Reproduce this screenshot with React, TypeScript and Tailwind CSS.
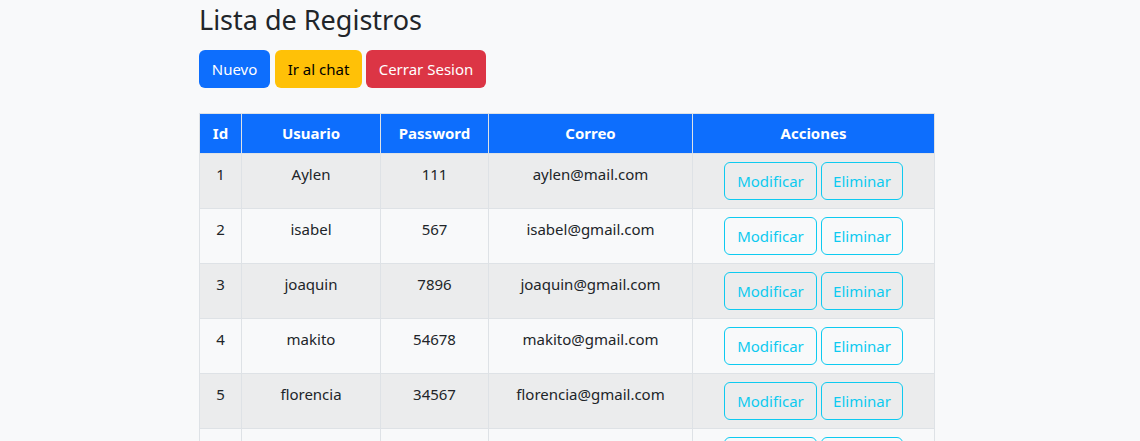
import React from "react";

const rows = [
  { id: 1, u: "Aylen", p: "111", c: "aylen@mail.com" },
  { id: 2, u: "isabel", p: "567", c: "isabel@gmail.com" },
  { id: 3, u: "joaquin", p: "7896", c: "joaquin@gmail.com" },
  { id: 4, u: "makito", p: "54678", c: "makito@gmail.com" },
  { id: 5, u: "florencia", p: "34567", c: "florencia@gmail.com" },
  { id: 6, u: "", p: "", c: "" },
];

export default function App() {
  return (
    <div
      className="w-[1140px] h-[441px] overflow-hidden bg-[#f8f9fa] text-[#212529] text-[16px] leading-[24px]"
      style={{ fontFamily: '"Noto Sans", "Open Sans", sans-serif' }}
    >
      <div className="ml-[199px] w-[735px]">
        <h2 className="text-[27px] leading-[38px] font-normal mb-[12px] pt-[1px] h-[38px]">Lista de Registros</h2>
        <div className="flex gap-[4px] mb-[25px]">
          <button className="w-[71px] h-[38px] rounded-[6px] bg-[#0d6efd] text-white text-[15px]">Nuevo</button>
          <button className="w-[87px] h-[38px] rounded-[6px] bg-[#ffc107] text-black text-[15px] ml-[1px]">Ir al chat</button>
          <button className="w-[120px] h-[38px] rounded-[6px] bg-[#dc3545] text-white text-[15px]">Cerrar Sesion</button>
        </div>
        <table className="w-[735px] table-fixed border-collapse border border-[#dee2e6]">
          <colgroup>
            <col className="w-[42px]" />
            <col className="w-[139px]" />
            <col className="w-[108px]" />
            <col className="w-[204px]" />
            <col className="w-[242px]" />
          </colgroup>
          <thead>
            <tr className="bg-[#0d6efd] text-white h-[40px]">
              {["Id", "Usuario", "Password", "Correo", "Acciones"].map((h) => (
                <th key={h} className="border border-[#dee2e6] font-bold text-[15px] text-center px-[8px] pt-[6px] pb-[8px]">
                  {h}
                </th>
              ))}
            </tr>
          </thead>
          <tbody>
            {rows.map((r, i) => (
              <tr key={r.id} className={i % 2 === 0 ? "bg-[#ebeced]" : "bg-[#f8f9fa]"}>
                <td className="border border-[#dee2e6] text-center align-top p-[8px] h-[55px] text-[15px]">{r.u ? r.id : ""}</td>
                <td className="border border-[#dee2e6] text-center align-top p-[8px] text-[15px]">{r.u}</td>
                <td className="border border-[#dee2e6] text-center align-top p-[8px] text-[15px]">{r.p}</td>
                <td className="border border-[#dee2e6] text-center align-top p-[8px] text-[15px]">{r.c}</td>
                <td className="border border-[#dee2e6] align-top p-[8px]">
                  <div className="flex justify-center gap-[4px]">
                    <button className="w-[93px] h-[38px] rounded-[6px] border border-[#0dcaf0] text-[#0dcaf0] text-[15px]">Modificar</button>
                    <button className="w-[82px] h-[38px] rounded-[6px] border border-[#0dcaf0] text-[#0dcaf0] text-[15px]">Eliminar</button>
                  </div>
                </td>
              </tr>
            ))}
          </tbody>
        </table>
      </div>
    </div>
  );
}
